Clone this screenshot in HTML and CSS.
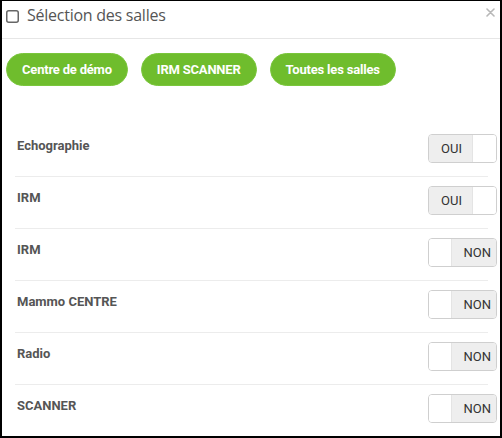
FILE: index.html
```html
<!DOCTYPE html>
<html lang="fr">
<head>
<meta charset="utf-8">
<link rel="stylesheet" href="styles.css">
</head>
<body>
<div class="modal">
  <div class="modal-header">
    <svg class="chk" width="13" height="13" viewBox="0 0 13 13"><rect x="0.75" y="0.75" width="11.5" height="11.5" rx="2" fill="none" stroke="#666" stroke-width="1.5"/></svg>
    <span class="title">Sélection des salles</span>
    <svg class="close" width="9" height="9" viewBox="0 0 9 9"><path d="M1 1L8 8M8 1L1 8" stroke="#b8b8b8" stroke-width="1.6" stroke-linecap="round"/></svg>
  </div>
  <div class="groups">
    <button class="grp">Centre de démo</button>
    <button class="grp">IRM SCANNER</button>
    <button class="grp">Toutes les salles</button>
  </div>
  <div class="rooms">
    <div class="room"><span class="label">Echographie</span><span class="toggle on"><span class="side">OUI</span><span class="knob"></span></span></div>
    <div class="room"><span class="label">IRM</span><span class="toggle on"><span class="side">OUI</span><span class="knob"></span></span></div>
    <div class="room"><span class="label">IRM</span><span class="toggle off"><span class="knob"></span><span class="side">NON</span></span></div>
    <div class="room"><span class="label">Mammo CENTRE</span><span class="toggle off"><span class="knob"></span><span class="side">NON</span></span></div>
    <div class="room"><span class="label">Radio</span><span class="toggle off"><span class="knob"></span><span class="side">NON</span></span></div>
    <div class="room last"><span class="label">SCANNER</span><span class="toggle off"><span class="knob"></span><span class="side">NON</span></span></div>
  </div>
</div>
</body>
</html>
```
FILE: styles.css
```css
* { box-sizing: border-box; }
html, body { margin: 0; padding: 0; background: #fff; }
.modal {
  width: 502px;
  height: 438px;
  border: 2px solid #000;
  border-top-width: 1px;
  background: #fff;
  overflow: hidden;
  font-family: Roboto, "Liberation Sans", Arial, sans-serif;
}
.modal-header {
  height: 38px;
  border-bottom: 1px solid #e6e6e6;
  display: flex;
  align-items: flex-start;
  padding: 0 0 0 4px;
  position: relative;
}
.chk { margin-top: 9px; flex: none; }
.title {
  margin-left: 8px;
  margin-top: 3px;
  font-family: "Open Sans", sans-serif;
  font-size: 16px;
  letter-spacing: -0.25px;
  line-height: 22px;
  color: #555;
}
.close {
  position: absolute;
  right: 5px;
  top: 7px;
}
.groups {
  display: flex;
  gap: 13px;
  padding: 14px 0 0 4px;
  height: 86px;
}
.grp {
  height: 33px;
  border: 1px solid #7ac63c;
  border-radius: 17px;
  background: #6fbd2d;
  color: #fff;
  font-family: Roboto, "Liberation Sans", Arial, sans-serif;
  font-weight: 700;
  font-size: 13px;
  letter-spacing: -0.2px;
  padding: 0 15px;
  cursor: pointer;
}
.rooms { padding: 0 12px 0 13px; }
.room {
  height: 52px;
  border-bottom: 1px solid #ececec;
  display: flex;
  justify-content: space-between;
  align-items: flex-start;
}
.room.last { border-bottom: none; }
.label {
  padding: 13px 0 0 2px;
  font-size: 13px;
  line-height: 16px;
  font-weight: 700;
  color: #555;
}
.toggle {
  margin-top: 9px;
  margin-right: -9px;
  width: 69px;
  height: 29px;
  border: 1px solid #cfcfcf;
  border-radius: 4px;
  display: flex;
  overflow: hidden;
  font-size: 13px;
  color: #333;
}
.toggle .side {
  background: #eee;
  width: 43px;
  display: flex;
  align-items: center;
  justify-content: center;
}
.toggle.off .side { width: 44px; justify-content: flex-end; padding-right: 5px; }
.toggle.on .side { padding-left: 2px; }
.knob { flex: 1; background: #fff; }
.toggle.off .knob { border-right: 1px solid #e4e4e4; }
.toggle.on .knob { border-left: 1px solid #e4e4e4; }
```
